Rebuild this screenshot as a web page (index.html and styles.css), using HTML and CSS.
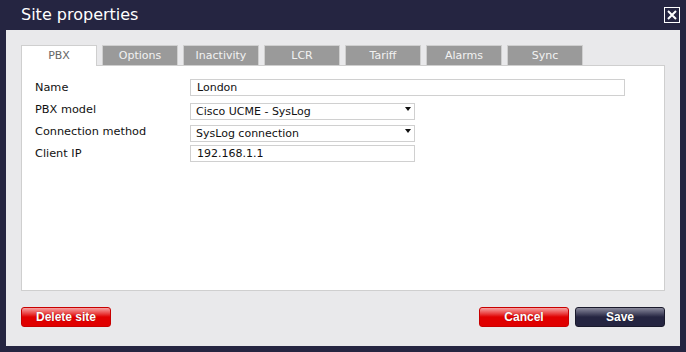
FILE: index.html
```html
<!DOCTYPE html>
<html lang="en">
<head>
  <meta charset="UTF-8" />
  <title>Site properties</title>
  <link rel="stylesheet" href="styles.css">
</head>
<body>
  <div class="dialog">
    <div class="titlebar">
      <h1>Site properties</h1>
      <button class="close" title="Close">
        <svg width="16" height="16" viewBox="0 0 16 16">
          <rect x="0.5" y="0.5" width="15" height="15" fill="none" stroke="#fff" />
          <path d="M4 4 L12 12 M12 4 L4 12" stroke="#fff" stroke-width="2" />
        </svg>
      </button>
    </div>

    <div class="panel">
      <ul class="tabs">
        <li class="tab active">PBX</li>
        <li class="tab">Options</li>
        <li class="tab">Inactivity</li>
        <li class="tab">LCR</li>
        <li class="tab">Tariff</li>
        <li class="tab">Alarms</li>
        <li class="tab">Sync</li>
      </ul>

      <div class="content">
        <div class="row">
          <label for="name">Name</label>
          <input type="text" id="name" class="wide" value="London" />
        </div>
        <div class="row">
          <label for="model">PBX model</label>
          <span class="select">
            <select id="model"><option>Cisco UCME - SysLog</option></select>
          </span>
        </div>
        <div class="row">
          <label for="method">Connection method</label>
          <span class="select">
            <select id="method"><option>SysLog connection</option></select>
          </span>
        </div>
        <div class="row">
          <label for="ip">Client IP</label>
          <input type="text" id="ip" value="192.168.1.1" />
        </div>
      </div>

      <div class="footer">
        <button class="btn btn-red">Delete site</button>
        <span class="spacer"></span>
        <button class="btn btn-red">Cancel</button>
        <button class="btn btn-navy">Save</button>
      </div>
    </div>
  </div>
</body>
</html>
```

FILE: styles.css
```css
body { margin: 0; background: #252541; font-family: "DejaVu Sans", Verdana, sans-serif; }
.dialog { width: 686px; height: 352px; }

.titlebar { height: 30px; display: flex; align-items: center; padding: 0 6px 0 21px; box-sizing: border-box; }
.titlebar h1 { margin: 0; flex: 1; color: #fff; font-size: 16px; font-weight: normal; line-height: 30px; }
.close { background: none; border: none; padding: 0; width: 16px; height: 16px; margin-top: -1px; cursor: pointer; }
.close svg { display: block; }

.panel { margin: 0 6px; height: 316px; box-sizing: border-box; padding: 15px 15px 19px; background: #e9e9eb; display: flex; flex-direction: column; }

.tabs { list-style: none; margin: 0; padding: 0; display: flex; gap: 5px; height: 20px; position: relative; z-index: 1; }
.tab { width: 76px; height: 20px; box-sizing: border-box; border: 1px solid #cfcfcf; border-bottom: none; background: #9a9a9a; color: #f2f2f2; font-size: 11px; text-align: center; line-height: 20px; }
.tab.active { background: #fff; color: #666; height: 21px; }

.content { height: 226px; box-sizing: border-box; border: 1px solid #cfcfcf; background: #fff; padding: 13px 13px; display: flex; flex-direction: column; gap: 5px; }
.row { display: flex; align-items: center; height: 17px; }
.row label { width: 155px; font-size: 11.3px; color: #111; }
.row input, .row select { font-family: inherit; font-size: 11px; color: #111; height: 17px; box-sizing: border-box; border: 1px solid #d0d0d0; background: #fff; padding: 0 6px; margin: 0; }
.row input { width: 225px; }
.row input.wide { width: 435px; }
.select { position: relative; display: block; }
.select select { width: 225px; appearance: none; -webkit-appearance: none; border-radius: 0; padding-left: 5px; outline: none; }
.select::after { content: ""; position: absolute; right: 4px; top: 7px; border-left: 3.5px solid transparent; border-right: 3.5px solid transparent; border-top: 4px solid #111; pointer-events: none; }

.footer { display: flex; gap: 6px; margin-top: 16px; }
.spacer { flex: 1; }
.btn { width: 90px; height: 20px; border-radius: 3px; font-family: "Liberation Sans", Arial, sans-serif; font-weight: bold; font-size: 12px; color: #fff; cursor: pointer; padding: 0; text-shadow: 0 0 1px rgba(0,0,0,0.4); }
.btn-red { border: 1px solid #c80000; background: linear-gradient(#f7a3a3 0%, #ea4444 30%, #e00000 50%, #e00000 100%); }
.btn-navy { border: 1px solid #1a1a2c; background: linear-gradient(#8a8a9c 0%, #4d4d66 30%, #252541 50%, #252541 100%); }
```
